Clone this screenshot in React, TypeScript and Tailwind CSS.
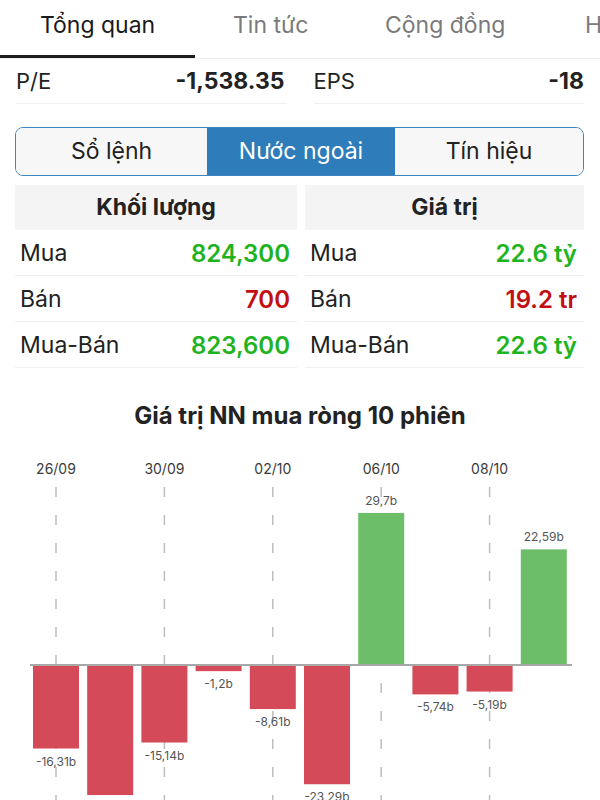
import React from "react";

const bars = [-16.31, -25.4, -15.14, -1.2, -8.61, -23.29, 29.7, -5.74, -5.19, 22.59];
const labels = ["-16,31b", "", "-15,14b", "-1,2b", "-8,61b", "-23,29b", "29,7b", "-5,74b", "-5,19b", "22,59b"];
const dates = ["26/09", "30/09", "02/10", "06/10", "08/10"];

function Chart() {
  const top = 436;
  const zero = 665 - top;
  const scale = 5.12;
  const cx = (i: number) => 56 + i * 54.2;
  return (
    <svg width="600" height="364" viewBox="0 0 600 364" className="block">
      {dates.map((d, k) => (
        <g key={d}>
          <text x={cx(k * 2)} y={38} textAnchor="middle" fontSize="14" fill="#3a3a3a" fontFamily="Inter, sans-serif">
            {d}
          </text>
          <line x1={cx(k * 2)} x2={cx(k * 2)} y1={51} y2={364} stroke="#bdbdbd" strokeWidth="1.5" strokeDasharray="10 18" />
        </g>
      ))}
      {bars.map((v, i) => {
        const h = Math.abs(v) * scale;
        const y = v >= 0 ? zero - h : zero;
        return (
          <rect key={i} x={cx(i) - 23} y={y} width={46} height={h} fill={v >= 0 ? "#6dbe69" : "#d44a59"} />
        );
      })}
      <line x1={30} x2={572} y1={zero} y2={zero} stroke="#a8a8a8" strokeWidth="2" />
      {bars.map((v, i) => {
        const h = Math.abs(v) * scale;
        const ly = v >= 0 ? zero - h - 8 : zero + h + 17;
        return (
          <text key={"l" + i} x={cx(i)} y={ly} textAnchor="middle" fontSize="12" fill="#555" fontFamily="Inter, sans-serif">
            {labels[i]}
          </text>
        );
      })}
    </svg>
  );
}

function Row({ label, value, color }: { label: string; value: string; color: string }) {
  return (
    <div className="flex h-[46px] items-center justify-between border-b border-[#efefef] pl-[5px] pr-[7px] pt-[2px]">
      <span className="text-[23px] text-[#222]">{label}</span>
      <span className={`text-[24px] font-semibold ${color}`}>{value}</span>
    </div>
  );
}

export default function App() {
  return (
    <div className="w-[600px] h-[800px] overflow-hidden bg-white font-['Inter',sans-serif]">
      {/* Top tabs */}
      <div className="flex h-[59px] border-b border-[#ececec] whitespace-nowrap overflow-hidden">
        <div className="w-[195px] shrink-0 border-b-[3px] border-[#1e1e1e] pl-[40px] pt-[8px] text-[23px] text-[#1a1a1a]">Tổng quan</div>
        <div className="w-[170px] shrink-0 pl-[38px] pt-[8px] text-[23px] text-[#7a7a7a]">Tin tức</div>
        <div className="w-[200px] shrink-0 pl-[20px] pt-[8px] text-[23px] text-[#7a7a7a]">Cộng đồng</div>
        <div className="shrink-0 pl-[20px] pt-[8px] text-[23px] text-[#7a7a7a]">Hồ sơ</div>
      </div>

      {/* P/E EPS */}
      <div className="flex gap-[27px] px-[16px]">
        <div className="flex h-[45px] flex-1 items-center justify-between border-b border-[#efefef] pt-[1px]">
          <span className="text-[22px] text-[#222]">P/E</span>
          <span className="text-[23px] font-bold text-[#222] pr-[2px]">-1,538.35</span>
        </div>
        <div className="flex h-[45px] flex-1 items-center justify-between border-b border-[#efefef] pt-[1px]">
          <span className="text-[22px] text-[#222]">EPS</span>
          <span className="text-[23px] font-bold text-[#222]">-18</span>
        </div>
      </div>

      {/* Segmented control */}
      <div className="mx-[15px] mr-[16px] mt-[23px] flex h-[49px] overflow-hidden rounded-[8px] border-[1.5px] border-[#3d86c2]">
        <div className="flex w-[191px] items-center justify-center bg-[#f7f7f7] text-[23px] text-[#222]">Sổ lệnh</div>
        <div className="flex w-[188px] items-center justify-center bg-[#2e7cb9] text-[23px] text-white">Nước ngoài</div>
        <div className="flex flex-1 items-center justify-center bg-[#f7f7f7] text-[23px] text-[#222]">Tín hiệu</div>
      </div>

      {/* Table */}
      <div className="mx-[15px] mr-[16px] mt-[9px] flex gap-[8px]">
        <div className="w-[282px]">
          <div className="flex h-[45px] items-center justify-center bg-[#f4f4f4] text-[23px] font-bold text-[#222]">Khối lượng</div>
          <Row label="Mua" value="824,300" color="text-[#1fb41f]" />
          <Row label="Bán" value="700" color="text-[#c20e14]" />
          <Row label="Mua-Bán" value="823,600" color="text-[#1fb41f]" />
        </div>
        <div className="flex-1">
          <div className="flex h-[45px] items-center justify-center bg-[#f4f4f4] text-[23px] font-bold text-[#222]">Giá trị</div>
          <Row label="Mua" value="22.6 tỷ" color="text-[#1fb41f]" />
          <Row label="Bán" value="19.2 tr" color="text-[#c20e14]" />
          <Row label="Mua-Bán" value="22.6 tỷ" color="text-[#1fb41f]" />
        </div>
      </div>

      {/* Chart title */}
      <div className="mt-[33px] text-center text-[24px] font-bold leading-[30px] text-[#222]">Giá trị NN mua ròng 10 phiên</div>

      <div className="mt-[5px]">
        <Chart />
      </div>
    </div>
  );
}
